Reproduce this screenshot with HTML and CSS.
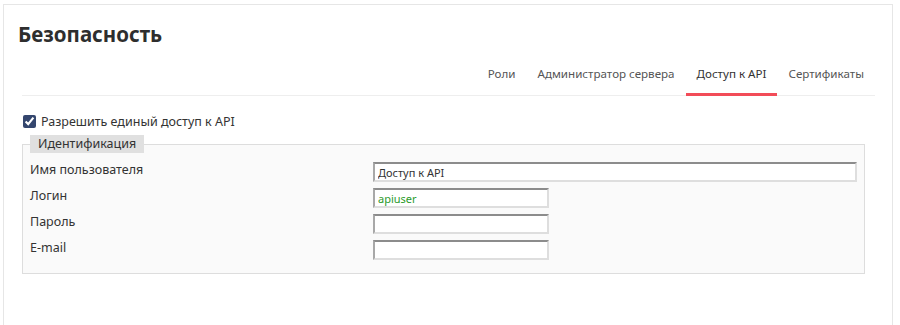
FILE: index.html
```html
<!DOCTYPE html>
<html lang="ru">
<head>
  <meta charset="UTF-8">
  <title>Безопасность</title>
  <link rel="stylesheet" href="styles.css">
</head>
<body>

<div class="panel">
  <h1 class="panel-title">Безопасность</h1>

  <!-- Tabs -->
  <div class="tabs">
    <div class="tab">Роли</div>
    <div class="tab">Администратор сервера</div>
    <div class="tab active">Доступ к API</div>
    <div class="tab">Сертификаты</div>
  </div>

  <label class="check-row">
    <input type="checkbox" checked>
    <span>Разрешить единый доступ к API</span>
  </label>

  <fieldset class="ident">
    <legend>Идентификация</legend>
    <div class="form-row">
      <div class="form-label">Имя пользователя</div>
      <input class="field wide" type="text" value="Доступ к API">
    </div>
    <div class="form-row">
      <div class="form-label">Логин</div>
      <input class="field login" type="text" value="apiuser">
    </div>
    <div class="form-row">
      <div class="form-label">Пароль</div>
      <input class="field" type="password">
    </div>
    <div class="form-row">
      <div class="form-label">E-mail</div>
      <input class="field" type="text">
    </div>
  </fieldset>
</div>

</body>
</html>
```

FILE: styles.css
```css
body {
  margin: 0;
  font-family: 'Noto Sans', 'Open Sans', sans-serif;
  background-color: #fff;
  color: #333;
}
.panel {
  margin: 4px 7px 0 3px;
  border: 1px solid #e6e6e6;
  border-bottom: none;
  height: 330px;
  padding: 0 17px 0 18px;
}
.panel-title {
  margin: 0 0 0 -4px;
  padding-top: 16px;
  font-size: 20.5px;
  line-height: 26px;
  font-weight: bold;
  color: #2e2e2e;
}
.tabs {
  display: flex;
  justify-content: flex-end;
  border-bottom: 1px solid #eeeeee;
  margin-top: 13px;
}
.tab {
  padding: 0 11px;
  height: 36px;
  line-height: 28px;
  font-size: 11.6px;
  color: #555;
  border-bottom: 3px solid transparent;
  margin-bottom: -1px;
  box-sizing: border-box;
}
.tab.active {
  color: #333;
  border-bottom-color: #f24c58;
}
.check-row {
  display: flex;
  align-items: center;
  gap: 5px;
  margin-top: 17px;
  margin-left: 1px;
  font-size: 12.5px;
  color: #333;
}
.check-row input {
  margin: 0;
  width: 13px;
  height: 13px;
  accent-color: #34466e;
}
.ident {
  margin: 5px 11px 0 0;
  padding: 9px 7px 7px 7px;
  border: 1px solid #dddddd;
  background-color: #fafafa;
}
.ident legend {
  background-color: #e0e0e0;
  padding: 0 8px;
  font-size: 12.5px;
  line-height: 18px;
  margin-left: 0;
}
.form-row {
  display: flex;
  align-items: flex-start;
  height: 26px;
}
.form-label {
  width: 343px;
  margin-top: -1px;
  font-size: 12.5px;
  line-height: 17px;
  color: #333;
}
.field {
  box-sizing: border-box;
  width: 176px;
  height: 20px;
  margin: 0;
  padding: 0 3px;
  font-family: 'Noto Sans', 'Open Sans', sans-serif;
  font-size: 11px;
  color: #333;
  background: #fff;
  border-style: solid;
  border-width: 2px;
  border-color: #8c8c8c #dedede #dedede #a8a8a8;
  outline: none;
}
.field.wide {
  width: 484px;
}
.field.login {
  color: #2a9a2a;
}
```
